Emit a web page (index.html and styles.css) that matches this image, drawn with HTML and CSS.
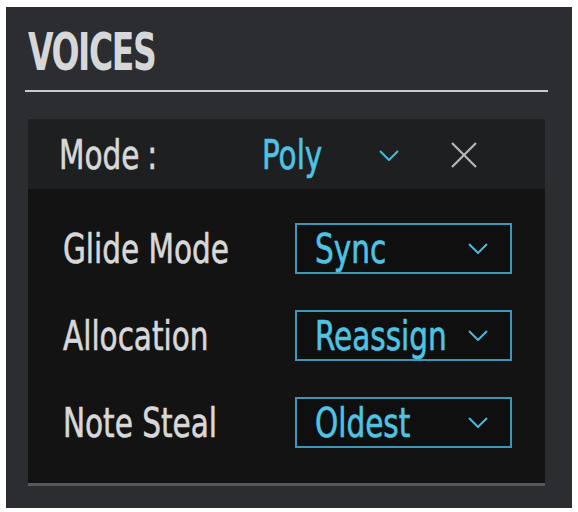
FILE: index.html
```html
<!DOCTYPE html>
<html lang="en">
<head>
    <meta charset="UTF-8">
    <meta name="viewport" content="width=device-width, initial-scale=1.0">
    <title>Voices</title>
    <link rel="stylesheet" href="styles.css">
</head>
<body>
    <div class="panel">
        <h1 class="title"><span>VOICES</span></h1>
        <div class="rule"></div>

        <div class="voices">
            <div class="voices-head">
                <span class="head-label"><span class="narrow">Mode :</span></span>
                <span class="head-value"><span class="narrow">Poly</span></span>
                <svg class="chevron head-chevron" width="20" height="11" viewBox="0 0 20 11">
                    <polyline points="1,1 10,10 19,1" />
                </svg>
                <svg class="close" width="26" height="26" viewBox="0 0 26 26">
                    <line x1="1" y1="1" x2="25" y2="25" />
                    <line x1="25" y1="1" x2="1" y2="25" />
                </svg>
            </div>

            <div class="voices-body">
                <div class="row">
                    <span class="label"><span class="narrow">Glide Mode</span></span>
                    <div class="select">
                        <span class="select-text"><span class="narrow">Sync</span></span>
                        <svg class="chevron" width="20" height="11" viewBox="0 0 20 11">
                            <polyline points="1,1 10,10 19,1" />
                        </svg>
                    </div>
                </div>
                <div class="row">
                    <span class="label"><span class="narrow">Allocation</span></span>
                    <div class="select">
                        <span class="select-text"><span class="narrow">Reassign</span></span>
                        <svg class="chevron" width="20" height="11" viewBox="0 0 20 11">
                            <polyline points="1,1 10,10 19,1" />
                        </svg>
                    </div>
                </div>
                <div class="row">
                    <span class="label"><span class="narrow">Note Steal</span></span>
                    <div class="select">
                        <span class="select-text"><span class="narrow">Oldest</span></span>
                        <svg class="chevron" width="20" height="11" viewBox="0 0 20 11">
                            <polyline points="1,1 10,10 19,1" />
                        </svg>
                    </div>
                </div>
            </div>
        </div>
    </div>
</body>
</html>
```

FILE: styles.css
```css
body {
    margin: 0;
    background: #ffffff;
    font-family: "DejaVu Sans Condensed", "DejaVu Sans", sans-serif;
}
.panel {
    margin: 7px 6px 0 6px;
    height: 501px;
    box-sizing: border-box;
    background: #2b2d30;
    padding: 21px 0 25px 0;
}
.title {
    margin: 0 0 12px 22px;
    font-size: 51px;
    line-height: 50px;
    font-weight: bold;
    letter-spacing: -2px;
    color: #d6d7d8;
}
.title span {
    display: inline-block;
    transform: scaleX(0.72);
    transform-origin: left center;
}
.narrow {
    display: inline-block;
    white-space: nowrap;
    transform: scaleX(0.82);
    transform-origin: left center;
    -webkit-text-stroke: 0.6px currentColor;
}
.rule {
    height: 2px;
    margin: 0 24px 0 19px;
    background: #c9cacb;
}
.voices {
    margin: 27px 27px 0 22px;
    border-bottom: 3px solid #55585c;
}
.voices-head {
    height: 70px;
    display: flex;
    align-items: center;
    padding: 2px 0 0 31px;
    box-sizing: border-box;
    background: #1e1f21;
}
.head-label {
    width: 203px;
    font-size: 40px;
    color: #d8d8d8;
    word-spacing: -2px;
}
.head-value {
    width: 117px;
    font-size: 40px;
    color: #4ec3e2;
}
.head-chevron {
    margin-right: 52px;
}
.chevron {
    flex-shrink: 0;
}
.chevron polyline {
    fill: none;
    stroke: #4ab8d8;
    stroke-width: 2;
}
.close line {
    stroke: #b9babb;
    stroke-width: 2.2;
}
.voices-body {
    background: #131314;
    padding: 34px 0 35px 35px;
    display: flex;
    flex-direction: column;
    gap: 36px;
}
.row {
    display: flex;
    align-items: center;
    height: 51px;
}
.label {
    width: 232px;
    font-size: 40px;
    color: #d8d8d8;
}
.select {
    width: 217px;
    height: 51px;
    box-sizing: border-box;
    border: 2px solid #3b96b8;
    background: #0f0f10;
    display: flex;
    align-items: center;
    padding: 0 22px 0 18px;
    font-size: 40px;
    color: #4ec3e2;
}
.select-text {
    flex: 1;
    min-width: 0;
}
```
